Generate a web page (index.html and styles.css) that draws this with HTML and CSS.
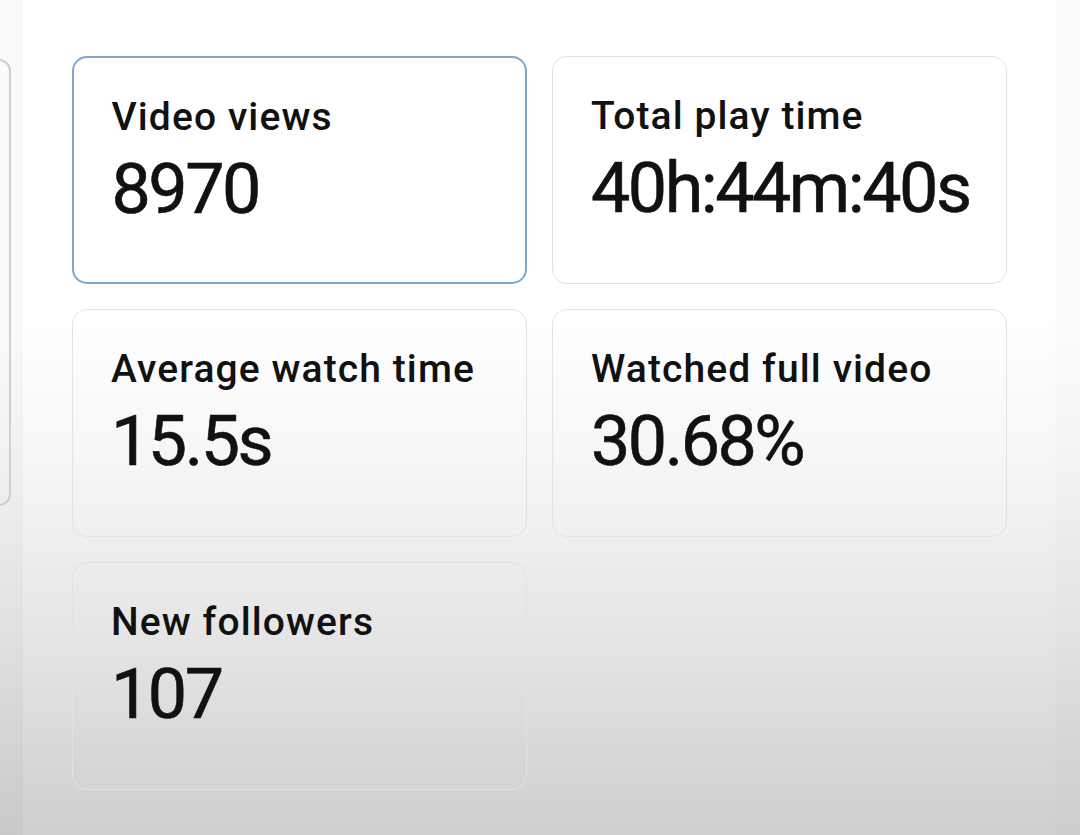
FILE: index.html
```html
<!DOCTYPE html>
<html lang="en">
<head>
<meta charset="utf-8">
<title>Video analytics</title>
<link rel="stylesheet" href="styles.css">
</head>
<body>
<div class="page">
  <aside class="side-left">
    <div class="side-card"></div>
  </aside>
  <main class="main">
    <div class="grid">
      <div class="card card-active">
        <div class="label">Video views</div>
        <div class="value">8970</div>
      </div>
      <div class="card">
        <div class="label">Total play time</div>
        <div class="value">40h:44m:40s</div>
      </div>
      <div class="card">
        <div class="label">Average watch time</div>
        <div class="value">15.5s</div>
      </div>
      <div class="card">
        <div class="label">Watched full video</div>
        <div class="value">30.68%</div>
      </div>
      <div class="card">
        <div class="label">New followers</div>
        <div class="value">107</div>
      </div>
    </div>
  </main>
  <aside class="side-right"></aside>
</div>
</body>
</html>
```

FILE: styles.css
```css
html, body {
  margin: 0;
  padding: 0;
  height: 100%;
}

body {
  font-family: Roboto, "Liberation Sans", Arial, sans-serif;
  color: #111111;
  background: linear-gradient(to bottom, #ffffff 0%, #ffffff 38%, #f6f6f6 55%, #e6e6e6 75%, #cecece 100%);
  overflow: hidden;
}

.page {
  display: flex;
  height: 835px;
  width: 1080px;
}

.side-left {
  width: 22px;
  flex: 0 0 22px;
  overflow: hidden;
  border-right: 1px solid rgba(0, 0, 0, 0.035);
  background: rgba(0, 0, 0, 0.02);
  padding-top: 59px;
  box-sizing: border-box;
}

.side-card {
  width: 200px;
  height: 447px;
  margin-left: -189px;
  border: 2px solid #cfcfcf;
  border-radius: 12px;
  box-sizing: border-box;
}

.main {
  flex: 1 1 auto;
  padding: 56px 0 0 50px;
}

.grid {
  display: grid;
  grid-template-columns: 455px 455px;
  grid-auto-rows: 228px;
  gap: 25px;
}

.card {
  box-sizing: border-box;
  border: 1.5px solid #e2e2e2;
  border-radius: 15px;
  padding: 36px 20px 0 38px;
}

.card-active {
  border: 2px solid #7fa6cd;
  background: #ffffff;
  padding: 35.5px 20px 0 37.5px;
}

.label {
  font-size: 39px;
  font-weight: 500;
  line-height: 46px;
  letter-spacing: 1.1px;
  white-space: nowrap;
}

.value {
  margin-top: 9px;
  font-size: 70px;
  font-weight: 400;
  line-height: 80px;
  letter-spacing: -2.5px;
  white-space: nowrap;
  -webkit-text-stroke: 0.6px #111111;
}

.side-right {
  width: 25px;
  flex: 0 0 25px;
  background: rgba(120, 100, 170, 0.025);
}
```
